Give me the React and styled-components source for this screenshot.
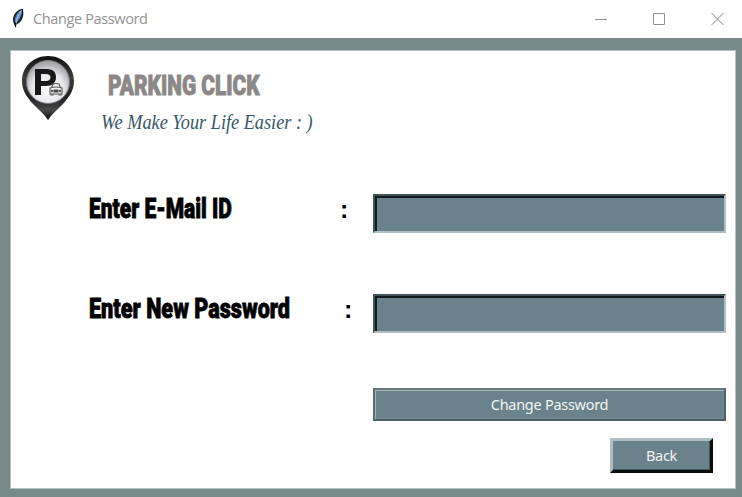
import React from "react";
import styled, { createGlobalStyle } from "styled-components";

const Global = createGlobalStyle`
  * { box-sizing: border-box; }
  body { margin: 0; background: #fff; overflow: hidden; }
`;

const Window = styled.div`
  width: 742px;
  height: 497px;
  display: flex;
  flex-direction: column;
  background: #fff;
`;

const TitleBar = styled.header`
  height: 38px;
  flex: none;
  display: flex;
  align-items: center;
  padding: 0 18px 0 10px;
`;

const Title = styled.span`
  margin-left: 7px;
  flex: 1;
  color: #929292;
  font: 14.5px/20px "Open Sans", sans-serif;
  letter-spacing: -0.37px;
`;

const Controls = styled.div`
  display: flex;
  gap: 46px;
  svg { display: block; }
`;

const Frame = styled.main`
  flex: 1;
  background: #788b89;
  padding: 12px 6px 8px 10px;
`;

const Panel = styled.section`
  width: 726px;
  height: 439px;
  background: #fff;
  border: 1px solid #b3c2c0;
`;

const Brand = styled.div`
  height: 143px;
  display: flex;
  padding: 4px 0 0 10px;
`;

const BrandText = styled.div`
  margin-left: 26px;
  padding-top: 15px;
`;

const Fit = styled.span`
  display: block;
  width: max-content;
  white-space: pre;
  transform-origin: 0 50%;
  transform: scaleX(${(p) => p.$x});
`;

const Heading = styled(Fit)`
  margin-left: 7px;
  font: 900 28px/32px Roboto, sans-serif;
  color: #8c8888;
  -webkit-text-stroke: 0.9px #8c8888;
`;

const Tagline = styled(Fit)`
  margin-top: 6px;
  font: italic 22px/28px "Liberation Serif", serif;
  color: #365766;
`;

const Row = styled.div`
  height: 100px;
  display: flex;
  padding-left: 78px;
`;

const Label = styled.div`
  width: ${(p) => p.$w}px;
  flex: none;
`;

const LabelText = styled(Fit)`
  font: 900 28px/29px Roboto, sans-serif;
  color: #000;
  -webkit-text-stroke: 0.8px #000;
`;

const Colon = styled.span`
  width: ${(p) => p.$w}px;
  flex: none;
  font: bold 25px/31px "Liberation Sans", sans-serif;
  color: #000;
`;

const Input = styled.input`
  width: 353px;
  height: 39px;
  padding: 2px 6px;
  outline: 0;
  border-radius: 0;
  background: #69828b;
  border: 2px solid;
  border-color: #435459 #b0bfc3 #b0bfc3 #435459;
  box-shadow: inset 2px 2px 0 #10191d;
  color: #fff;
  font: 16px "Open Sans", sans-serif;
`;

const Actions = styled.div`
  display: flex;
  flex-direction: column;
  align-items: flex-end;
  padding-right: 9px;
  margin-top: -6px;
`;

const Button = styled.button`
  padding: 0 0 1px;
  border-radius: 0;
  background: #69828b;
  color: #f2f5f6;
  font: 14.5px/20px "Noto Sans", sans-serif;
  letter-spacing: -0.28px;
`;

const Submit = styled(Button)`
  width: 353px;
  height: 33px;
  border: 2px solid;
  border-color: #68797e #4b5f66 #4b5f66 #5b6c71;
  box-shadow: inset 1px 1px 0 #a3b3b8, inset 0 0 0 1px #72898f;
`;

const Back = styled(Button)`
  width: 103px;
  height: 35px;
  margin: 17px 13px 0 0;
  border: 3px solid;
  border-color: #aebec2 #0a0d0e #0a0d0e #aebec2;
  box-shadow: inset -1px -1px 0 #435459;
`;

const Feather = () => (
  <svg width="16" height="22" viewBox="0 0 16 22">
    <path d="M5.5 19C3 14 2 12 4 7 7 2 10 1 13 1c1 6 0 11-4 14l-3 2z" fill="#20252d" />
    <path d="M5 14C4 9 8 3 12 2c0 5-2 9-5 12z" fill="#5b8cc9" />
    <path d="M5.5 20C6 13 8 7 11 3" fill="none" stroke="#bdd8ef" strokeWidth=".8" />
    <path d="M5.5 15v4" stroke="#111" strokeWidth="1.2" />
  </svg>
);

const Pin = () => (
  <svg width="54" height="66" viewBox="0 0 54 66">
    <defs>
      <linearGradient id="shell" x1="0" y1="0" x2="0" y2="1">
        <stop offset="0" stopColor="#111" />
        <stop offset=".35" stopColor="#3c3c3c" />
        <stop offset=".65" stopColor="#222" />
        <stop offset=".84" stopColor="#484848" />
        <stop offset="1" stopColor="#111" />
      </linearGradient>
      <radialGradient id="face" cx=".5" cy=".65" r=".58">
        <stop offset="0" stopColor="#fff" />
        <stop offset=".65" stopColor="#e6e6ea" />
        <stop offset="1" stopColor="#a9a9ad" />
      </radialGradient>
    </defs>
    <path d="M27 1C12 1 1 12 1 26c0 10 5 16 11 23 6 6 11 10 15 16 4-6 9-10 15-16 6-7 11-13 11-23C53 12 42 1 27 1z" fill="url(#shell)" />
    <circle cx="27" cy="27" r="21.5" fill="url(#face)" stroke="#777" />
    <path fillRule="evenodd" d="M14 14h12c7 0 9 4 9 8 0 6-4 9-10 9h-5v9h-6zM20 19v7h5c6 0 6-7 0-7z" fill="#181818" />
    <g fill="#eee" stroke="#555" strokeWidth="1.1">
      <path d="M30 34l2-5q3-1 6 0l2 5z" />
      <path d="M29 33q6-2 12 0v6H29z" />
      <path d="M33 35h4v2h-4z" fill="#333" />
      <path d="M30 39v1h2v-1M38 39v1h2v-1" />
      <circle cx="31" cy="36" r=".7" />
      <circle cx="39" cy="36" r=".7" />
    </g>
  </svg>
);

export default function App() {
  return (
    <Window>
      <Global />
      <TitleBar>
        <Feather />
        <Title>Change Password</Title>
        <Controls>
          <svg width="12" height="12"><path d="M0 6.5h12" stroke="#929292" /></svg>
          <svg width="12" height="12"><path d="M.5.5h11v11H.5z" fill="none" stroke="#929292" /></svg>
          <svg width="13" height="12"><path d="M.5 0l12 12M12.5 0L.5 12" stroke="#858585" /></svg>
        </Controls>
      </TitleBar>
      <Frame>
        <Panel>
          <Brand>
            <Pin />
            <BrandText>
              <Heading $x={0.745}>PARKING CLICK</Heading>
              <Tagline $x={0.83}>We Make Your Life Easier : )</Tagline>
            </BrandText>
          </Brand>
          <Row>
            <Label $w={251}><LabelText $x={0.75}>Enter E-Mail ID</LabelText></Label>
            <Colon $w={33}>:</Colon>
            <Input aria-label="Enter E-Mail ID" />
          </Row>
          <Row>
            <Label $w={255}><LabelText $x={0.773}>Enter New Password</LabelText></Label>
            <Colon $w={29}>:</Colon>
            <Input type="password" aria-label="Enter New Password" />
          </Row>
          <Actions>
            <Submit>Change Password</Submit>
            <Back>Back</Back>
          </Actions>
        </Panel>
      </Frame>
    </Window>
  );
}
